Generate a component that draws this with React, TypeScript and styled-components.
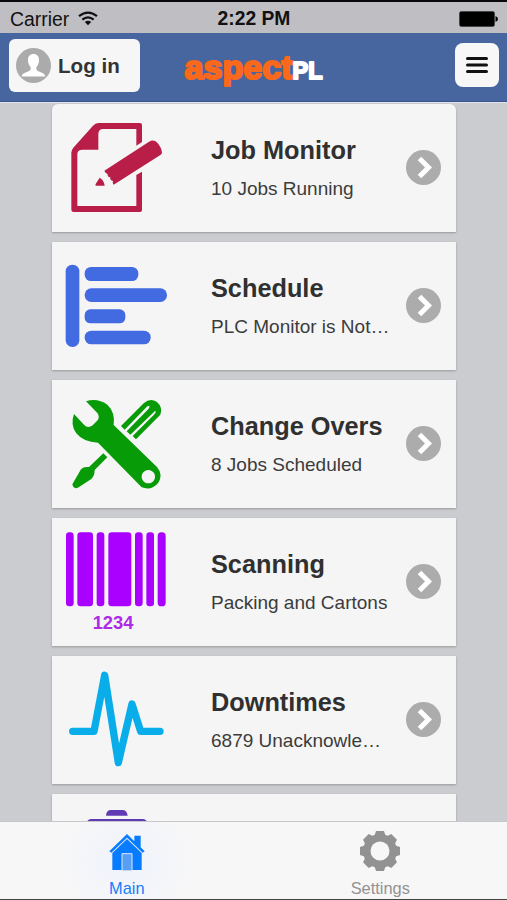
import React from 'react';
import styled, { createGlobalStyle } from 'styled-components';

const GlobalStyle = createGlobalStyle`
  *, *::before, *::after { box-sizing: border-box; }
  body { margin: 0; background: #c9cbce; font-family: 'Liberation Sans', Arial, sans-serif; }
`;

const Screen = styled.div`
  width: 507px;
  height: 900px;
  display: flex;
  flex-direction: column;
  overflow: hidden;
  background: #cbccd0;
  border-top: 2px solid #08080a;
  border-bottom: 1px solid #444;
`;

const StatusBar = styled.div`
  flex: none;
  height: 31px;
  display: grid;
  grid-template-columns: 1fr auto 1fr;
  align-items: center;
  padding: 2px 9px 0 10px;
  background: #bfbec3;
  color: #111;
  font-size: 19.4px;
  line-height: 28px;
`;

const Carrier = styled.div`
  display: flex;
  align-items: center;
  gap: 9px;
`;

const Clock = styled.div`
  font-weight: 700;
  font-size: 19.3px;
`;

const BatterySlot = styled.div`
  display: flex;
  justify-content: flex-end;
`;

const Header = styled.header`
  flex: none;
  height: 69px;
  display: grid;
  grid-template-columns: 1fr auto 1fr;
  align-items: start;
  padding: 6px 8px 0 9px;
  background: #47659f;
  border-bottom: 1px solid #3b5491;
`;

const LoginButton = styled.button`
  width: 131px;
  height: 53px;
  display: flex;
  align-items: center;
  gap: 7px;
  padding: 0 0 0 7px;
  border: 0;
  border-radius: 6px;
  background: #f6f6f6;
  color: #333;
  font: 700 20.6px 'Liberation Sans', Arial, sans-serif;
`;

const MenuButton = styled.button`
  justify-self: end;
  width: 44px;
  height: 44px;
  margin-top: 4px;
  padding: 0;
  display: grid;
  place-items: center;
  border: 0;
  border-radius: 8px;
  background: #f7f7f7;
`;

const LogoBox = styled.div`
  width: 150px;
  height: 60px;
  margin-left: 3px;
`;

const Content = styled.main`
  flex: 1;
  min-height: 0;
  overflow: hidden;
  padding: 1px 51px 0 52px;
  display: flex;
  flex-direction: column;
  gap: 10px;
  border-top: 1px solid #e2e5ef;
`;

const Card = styled.section`
  flex: none;
  height: 128px;
  display: grid;
  grid-template-columns: 133px 26px 180px 1fr;
  background: #f5f5f5;
  box-shadow: 0 1px 2px #999;

  &:first-child { border-radius: 6px 6px 0 0; }
`;

const CardText = styled.div`
  grid-column: 3;
  padding-top: 31px;
  color: #303030;
`;

const Title = styled.h2`
  margin: 0;
  font-size: 25.3px;
  line-height: 30px;
  font-weight: 700;
  white-space: nowrap;
`;

const Subtitle = styled.p`
  margin: 13px 0 0;
  font-size: 19px;
  line-height: 22px;
  white-space: nowrap;
  color: #3c3c3c;
`;

const ChevronSlot = styled.div`
  display: flex;
  justify-content: flex-end;
  padding: 46px 15px 0 0;
`;

const TabBar = styled.nav`
  flex: none;
  height: 78px;
  display: grid;
  grid-template-columns: 1fr 1fr;
  background: #f7f7f8;
  border-top: 1px solid #c8c8ca;
`;

const Tab = styled.div<{ $active?: boolean }>`
  display: flex;
  flex-direction: column;
  align-items: center;
  padding-top: 9px;
  color: ${p => (p.$active ? '#167efb' : '#929292')};
  background: ${p => (p.$active ? 'radial-gradient(ellipse 64px 60px at center, #eff3fc, #f7f7f8)' : 'none')};
  font-size: 16.4px;
  line-height: 20px;
  gap: 7px;
`;

const TabIcon = styled.div`
  height: 40px;
  display: flex;
  align-items: flex-end;
`;

const IconSvg = styled.svg`
  display: block;
  overflow: hidden;
`;

const Wifi = () => (
  <IconSvg width="20" height="15" viewBox="0 0 20 15" fill="none" stroke="#111" strokeWidth="2.3">
    <path d="M1 5.2Q10-2 19 5.2M4.3 8.6Q10 4.1 15.7 8.6" />
    <path d="M6.8 11.1Q10 8.6 13.2 11.1L10 14.3Z" fill="#111" stroke="none" />
  </IconSvg>
);

const Battery = () => (
  <IconSvg width="39" height="16" viewBox="0 0 39 16">
    <rect x=".5" y=".5" width="35" height="15" rx="2" stroke="#454548" />
    <rect x="1" y="1" width="34" height="14" rx="1" />
    <path d="M36.5 5Q39 6 39 8T36.5 11Z" />
  </IconSvg>
);

const Avatar = () => (
  <IconSvg width="35" height="35" viewBox="0 0 35 35">
    <circle cx="17.5" cy="17.5" r="17.5" fill="#ababab" />
    <path
      fill="#fff"
      d="M17.5 6C13.8 6 12 8.5 12 12c0 3 1 5.5 2.7 7.2 0 2.7-.4 3.2-2.1 4-3.5 1.4-6.2 2-7 5.3h23.8c-.8-3.3-3.600-3.900-7-5.300-1.700-.8-2.100-1.300-2.100-4C22 17.500 23 15 23 12c0-3.500-1.800-6-5.500-6Z"
    />
  </IconSvg>
);

const Chevron = () => (
  <IconSvg width="35" height="35" viewBox="0 0 35 35" fill="none">
    <circle cx="17.5" cy="17.5" r="17.5" fill="#acacac" />
    <path d="M13.5 8.5l9 9-9 9" stroke="#fff" strokeWidth="5" />
  </IconSvg>
);

const Logo = () => (
  <IconSvg width="150" height="60" viewBox="180 39 150 60" fontFamily="'Liberation Sans', Arial, sans-serif" fontWeight="700" strokeLinejoin="round">
    <text x="183.500" y="79" fontSize="34" fill="#fa681b" stroke="#fa681b" strokeWidth="2.2" textLength="108" lengthAdjust="spacingAndGlyphs">aspect</text>
    <text x="291.500" y="79" fontSize="24" fill="#fff" stroke="#fff" strokeWidth="2" textLength="30" lengthAdjust="spacingAndGlyphs">PL</text>
  </IconSvg>
);

const cardArt = {
  job: (
    <g fill="#b91e49">
      <path
        fillRule="evenodd"
        d="M160 69H285Q291 69 291 75V126L274 137V87H175Q160 87 160 103V149H114Q97 149 97 162V318H274V225L291 215V330Q291 336 285 336H86Q79 336 79 329V158Q79 150 85 143L144 77Q151 69 160 69Z"
      />
      <path d="M178 212L312 125Q326 116 337 128Q350 143 351 158Q350 163 345 166L206 254Q201 251 204 243Q194 242 196 232Q186 231 188 222Q181 220 178 212Z" />
      <path d="M164 233Q177 241 179 257H154Q149 257 152 252Z" />
    </g>
  ),
  schedule: (
    <g fill="#426ae1">
      <rect x="62" y="80" width="41" height="247" rx="20" />
      <rect x="119" y="87" width="161" height="42" rx="19" />
      <rect x="119" y="151" width="247" height="41" rx="20" />
      <rect x="119" y="214" width="122" height="42" rx="17" />
      <rect x="119" y="278" width="198" height="41" rx="20" />
    </g>
  ),
  tools: (
    <g fill="#079b07">
      <path
        fillRule="evenodd"
        d="M123 76Q157 65 187 86Q211 108 206 147L336 273Q355 296 340 320Q320 345 290 334L159 200Q114 198 94 172Q75 147 87 114L117 146Q128 159 143 148L158 133Q165 122 157 111ZM310 282a20 20 0 1 0 .1 0Z"
      />
      <path d="M228 150L296 82Q315 65 335 77Q354 93 346 116L273 190L263 180L329 114Q335 105 330 105L256 176L245 166L311 98Q318 86 307 91L239 161Z" />
      <path d="M175 232L187 244L149 282Q149 299 139 309L101 334Q86 342 82 325L108 280Q115 271 132 273Z" />
    </g>
  ),
  barcode: (
    <g fill="#aa00ff">
      <rect x="63" y="55" width="23" height="222" rx="10" />
      <rect x="97" y="55" width="47" height="222" rx="10" />
      <rect x="155" y="55" width="23" height="222" rx="10" />
      <rect x="190" y="55" width="69" height="222" rx="10" />
      <rect x="270" y="55" width="23" height="222" rx="10" />
      <rect x="304" y="55" width="23" height="222" rx="10" />
      <rect x="338" y="55" width="24" height="222" rx="11" />
      <text x="143" y="344" fontSize="55" fontWeight="700" fontFamily="'Liberation Sans', Arial, sans-serif" textLength="122" fill="#ad2be4">1234</text>
    </g>
  ),
  pulse: (
    <path d="M83 238H147L179 70L220 332L261 156L287 238H345" fill="none" stroke="#08adea" strokeWidth="22" strokeLinecap="round" strokeLinejoin="round" />
  ),
  bag: (
    <g fill="#6039b4">
      <path d="M183 77Q184 60 198 60H232Q246 60 248 77Z" />
      <rect x="125" y="87" width="182" height="150" rx="14" />
    </g>
  ),
};

const items: { art: keyof typeof cardArt; title: string; subtitle: string }[] = [
  { art: 'job', title: 'Job Monitor', subtitle: '10 Jobs Running' },
  { art: 'schedule', title: 'Schedule', subtitle: 'PLC Monitor is Not…' },
  { art: 'tools', title: 'Change Overs', subtitle: '8 Jobs Scheduled' },
  { art: 'barcode', title: 'Scanning', subtitle: 'Packing and Cartons' },
  { art: 'pulse', title: 'Downtimes', subtitle: '6879 Unacknowle…' },
];

const House = () => (
  <IconSvg width="36" height="38" viewBox="0 0 108 114">
    <path fill="#087cff" d="M54 3L76 25V8H95V43L107 55L101 59L54 14L7 59L1 55Z" />
    <path fill="#087cff" d="M54 18L98 60V111H10V60Z" />
    <path fill="#579ff5" stroke="#d9e9fc" strokeWidth="3" d="M39 112V62H69V112" />
  </IconSvg>
);

const Gear = () => (
  <IconSvg width="40" height="40" viewBox="-60 -60 120 120" fill="#929292">
    {[0, 45, 90, 135].map(a => (
      <path key={a} d="M-12-60H12L17-44V44L12 60H-12L-17 44V-44Z" transform={`rotate(${a})`} />
    ))}
    <circle r="51" />
    <circle r="28.500" fill="#f7f7f8" />
  </IconSvg>
);

export default function App() {
  return (
    <>
      <GlobalStyle />
      <Screen>
        <StatusBar>
          <Carrier>Carrier<Wifi /></Carrier>
          <Clock>2:22 PM</Clock>
          <BatterySlot><Battery /></BatterySlot>
        </StatusBar>
        <Header>
          <LoginButton><Avatar />Log in</LoginButton>
          <LogoBox><Logo /></LogoBox>
          <MenuButton aria-label="Menu">
            <IconSvg width="22" height="18" viewBox="0 0 22 18" stroke="#111" strokeWidth="3" strokeLinecap="round">
              <path d="M1.5 2.5h19M1.5 9h19M1.5 15.5h19" />
            </IconSvg>
          </MenuButton>
        </Header>
        <Content>
          {items.map(item => (
            <Card key={item.title}>
              <IconSvg width="133" height="128" viewBox="21 12 399 384">{cardArt[item.art]}</IconSvg>
              <CardText>
                <Title>{item.title}</Title>
                <Subtitle>{item.subtitle}</Subtitle>
              </CardText>
              <ChevronSlot><Chevron /></ChevronSlot>
            </Card>
          ))}
          <Card>
            <IconSvg width="133" height="128" viewBox="21 12 399 384">{cardArt.bag}</IconSvg>
          </Card>
        </Content>
        <TabBar>
          <Tab $active><TabIcon><House /></TabIcon>Main</Tab>
          <Tab><TabIcon><Gear /></TabIcon>Settings</Tab>
        </TabBar>
      </Screen>
    </>
  );
}
